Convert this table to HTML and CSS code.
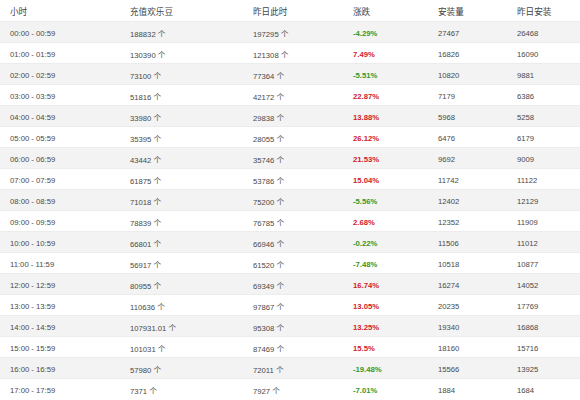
FILE: index.html
```html
<!DOCTYPE html>
<html lang="zh-CN">
<head>
    <meta charset="UTF-8">
    <meta name="viewport" content="width=device-width, initial-scale=1.0">
    <title>每小时充值统计</title>
    <link rel="stylesheet" href="styles.css">
    <script>
        const hours = [
            ["00:00 - 00:59", "188832", "197295", "-4.29%", 27467, 26468],
            ["01:00 - 01:59", "130390", "121308", "7.49%", 16826, 16090],
            ["02:00 - 02:59", "73100", "77364", "-5.51%", 10820, 9881],
            ["03:00 - 03:59", "51816", "42172", "22.87%", 7179, 6386],
            ["04:00 - 04:59", "33980", "29838", "13.88%", 5968, 5258],
            ["05:00 - 05:59", "35395", "28055", "26.12%", 6476, 6179],
            ["06:00 - 06:59", "43442", "35746", "21.53%", 9692, 9009],
            ["07:00 - 07:59", "61875", "53786", "15.04%", 11742, 11122],
            ["08:00 - 08:59", "71018", "75200", "-5.56%", 12402, 12129],
            ["09:00 - 09:59", "78839", "76785", "2.68%", 12352, 11909],
            ["10:00 - 10:59", "66801", "66946", "-0.22%", 11506, 11012],
            ["11:00 - 11:59", "56917", "61520", "-7.48%", 10518, 10877],
            ["12:00 - 12:59", "80955", "69349", "16.74%", 16274, 14052],
            ["13:00 - 13:59", "110636", "97867", "13.05%", 20235, 17769],
            ["14:00 - 14:59", "107931.01", "95308", "13.25%", 19340, 16868],
            ["15:00 - 15:59", "101031", "87469", "15.5%", 18160, 15716],
            ["16:00 - 16:59", "57980", "72011", "-19.48%", 15566, 13925],
            ["17:00 - 17:59", "7371", "7927", "-7.01%", 1884, 1684],
        ];

        document.addEventListener("DOMContentLoaded", () => {
            const tableBody = document.querySelector(".stats tbody");
            hours.forEach(([hour, beans, lastBeans, change, installs, lastInstalls]) => {
                const row = document.createElement("tr");
                const trend = change.startsWith("-") ? "down" : "up";
                row.innerHTML = `
                    <td>${hour}</td>
                    <td>${beans} 个</td>
                    <td>${lastBeans} 个</td>
                    <td class='${trend}'>${change}</td>
                    <td>${installs}</td>
                    <td>${lastInstalls}</td>`;
                tableBody.appendChild(row);
            });
        });
    </script>
</head>
<body>
    <table class="stats">
        <colgroup>
            <col class="col-hour">
            <col class="col-beans">
            <col class="col-last">
            <col class="col-change">
            <col class="col-install">
            <col class="col-last-install">
        </colgroup>
        <thead>
            <tr>
                <th>小时</th>
                <th>充值欢乐豆</th>
                <th>昨日此时</th>
                <th>涨跌</th>
                <th>安装量</th>
                <th>昨日安装</th>
            </tr>
        </thead>
        <tbody>
            <!-- rows are filled in from the data above -->
        </tbody>
    </table>
</body>
</html>
```

FILE: styles.css
```css
body {
    margin: 0;
    padding: 0;
    background: #fff;
    font-family: "Liberation Sans", "Noto Sans CJK SC", sans-serif;
    font-size: 7.7px;
    color: #4a4a4a;
}
.stats {
    width: 580px;
    border-collapse: collapse;
    table-layout: fixed;
}
.col-hour { width: 120px; }
.col-beans { width: 123px; }
.col-last { width: 100px; }
.col-change { width: 85px; }
.col-install { width: 79px; }
.col-last-install { width: 73px; }
.stats th, .stats td {
    text-align: left;
    padding: 0 0 0 10px;
    white-space: nowrap;
}
.stats th {
    height: 21px;
    font-weight: normal;
    font-size: 8.6px;
    color: #444;
}
.stats td {
    height: 21px;
    padding-top: 2px;
    box-sizing: border-box;
}
.stats tbody tr {
    border-top: 1px solid #ececec;
}
.stats tbody tr:nth-child(odd) {
    background: #f3f3f3;
}
.stats .up {
    color: #d0202c;
    font-weight: bold;
}
.stats .down {
    color: #2f9a2f;
    font-weight: bold;
}
```
